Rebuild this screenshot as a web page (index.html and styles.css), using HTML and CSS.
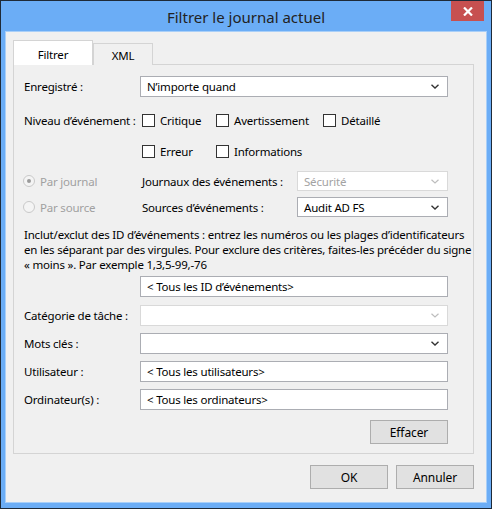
FILE: index.html
```html
<!DOCTYPE html>
<html lang="fr">
<head>
<meta charset="utf-8">
<title>Filtrer le journal actuel</title>
<link rel="stylesheet" href="styles.css">
</head>
<body>
<div class="window">
  <div class="titlebar">
    <span class="title">Filtrer le journal actuel</span>
    <div class="close" aria-label="Fermer">
      <svg width="10" height="9" viewBox="0 0 10 9"><path d="M1 0.5 L9 8.5 M9 0.5 L1 8.5" stroke="#fff" stroke-width="2.2" fill="none"/></svg>
    </div>
  </div>
  <div class="client">
    <div class="tabs">
      <div class="tab active">Filtrer</div>
      <div class="tab">XML</div>
    </div>
    <div class="panel">
      <div class="row row-first">
        <span class="lbl">Enregistré :</span>
        <div class="select"><span>N’importe quand</span><svg class="chev" width="8" height="5" viewBox="0 0 8 5"><path d="M0.5 0.8 L4 4 L7.5 0.8" stroke="#333" stroke-width="1.4" fill="none"/></svg></div>
      </div>
      <div class="row row-chk1">
        <span class="lbl">Niveau d’événement :</span>
        <div class="checks">
          <label class="chk w1"><span class="box"></span>Critique</label>
          <label class="chk w2"><span class="box"></span>Avertissement</label>
          <label class="chk"><span class="box"></span>Détaillé</label>
        </div>
      </div>
      <div class="row row-chk2">
        <span class="lbl"></span>
        <div class="checks">
          <label class="chk w1"><span class="box"></span>Erreur</label>
          <label class="chk w2"><span class="box"></span>Informations</label>
        </div>
      </div>
      <div class="row row-radio1">
        <label class="radio disabled"><span class="circle checked"></span>Par journal</label>
        <div class="sub">
          <span class="sublbl">Journaux des événements :</span>
          <div class="select small disabled"><span>Sécurité</span><svg class="chev" width="8" height="5" viewBox="0 0 8 5"><path d="M0.5 0.8 L4 4 L7.5 0.8" stroke="#bdbdbd" stroke-width="1.2" fill="none"/></svg></div>
        </div>
      </div>
      <div class="row row-radio2">
        <label class="radio disabled"><span class="circle"></span>Par source</label>
        <div class="sub">
          <span class="sublbl">Sources d’événements :</span>
          <div class="select small"><span>Audit AD FS</span><svg class="chev" width="8" height="5" viewBox="0 0 8 5"><path d="M0.5 0.8 L4 4 L7.5 0.8" stroke="#333" stroke-width="1.4" fill="none"/></svg></div>
        </div>
      </div>
      <p class="help">Inclut/exclut des ID d’événements : entrez les numéros ou les plages d’identificateurs<br>en les séparant par des virgules. Pour exclure des critères, faites-les précéder du signe<br>« moins ». Par exemple 1,3,5-99,-76</p>
      <div class="row row-id">
        <span class="lbl"></span>
        <div class="input">&lt; Tous les ID d’événements&gt;</div>
      </div>
      <div class="row row-field row-cat">
        <span class="lbl">Catégorie de tâche :</span>
        <div class="select disabled"><span></span><svg class="chev" width="8" height="5" viewBox="0 0 8 5"><path d="M0.5 0.8 L4 4 L7.5 0.8" stroke="#bdbdbd" stroke-width="1.2" fill="none"/></svg></div>
      </div>
      <div class="row row-field">
        <span class="lbl">Mots clés :</span>
        <div class="select"><span></span><svg class="chev" width="8" height="5" viewBox="0 0 8 5"><path d="M0.5 0.8 L4 4 L7.5 0.8" stroke="#333" stroke-width="1.4" fill="none"/></svg></div>
      </div>
      <div class="row row-field">
        <span class="lbl">Utilisateur :</span>
        <div class="input">&lt; Tous les utilisateurs&gt;</div>
      </div>
      <div class="row row-field">
        <span class="lbl">Ordinateur(s) :</span>
        <div class="input">&lt; Tous les ordinateurs&gt;</div>
      </div>
      <div class="clear-row">
        <button class="btn">Effacer</button>
      </div>
    </div>
    <div class="actions">
      <button class="btn">OK</button>
      <button class="btn">Annuler</button>
    </div>
  </div>
</div>
</body>
</html>
```

FILE: styles.css
```css
* { box-sizing: border-box; }
html, body { margin: 0; padding: 0; background: #6badf6; }
body {
  font-family: "Segoe UI", "Noto Sans", sans-serif;
  font-size: 11.5px;
  letter-spacing: -0.2px;
  color: #000;
}
.window {
  width: 492px;
  height: 509px;
  border: 1px solid #1e2a38;
  background: #6badf6;
  padding: 0 4px 5px 4px;
  position: relative;
  display: flex;
  flex-direction: column;
}
.titlebar {
  height: 30px;
  display: flex;
  align-items: center;
  justify-content: center;
}
.title {
  font-size: 15px;
  letter-spacing: 0;
  color: #222;
  padding-top: 1px;
}
.close {
  position: absolute;
  top: 0;
  right: 7px;
  width: 33px;
  height: 20px;
  background: #c75050;
  display: flex;
  align-items: center;
  justify-content: center;
}
.client {
  flex: 1;
  background: #f0f0f0;
  border: 1px solid #a9cff8;
  padding: 9px 12px 0 7px;
  display: flex;
  flex-direction: column;
}
.tabs {
  display: flex;
  align-items: flex-end;
  height: 24px;
  position: relative;
  z-index: 1;
  margin-bottom: -1px;
}
.tab {
  height: 22px;
  border: 1px solid #d4d4d4;
  border-bottom: none;
  background: #f0f0f0;
  display: flex;
  align-items: center;
  justify-content: center;
  width: 60px;
  margin-left: -1px;
  padding-top: 1px;
}
.tab.active {
  height: 25px;
  width: 80px;
  margin-left: 0;
  background: #fff;
  margin-right: 1px;
  padding-top: 3px;
}
.panel {
  height: 390px;
  border: 1px solid #d4d4d4;
  padding: 11px 25px 0 10px;
  display: flex;
  flex-direction: column;
}
.row {
  display: grid;
  grid-template-columns: 116px 308px;
  align-items: center;
}
.row-first { height: 21px; }
.row-chk1 { height: 20px; margin-top: 13px; }
.row-chk2 { height: 20px; margin-top: 11px; }
.row-radio1 { height: 20px; margin-top: 10px; }
.row-radio2 { height: 20px; margin-top: 6px; }
.row-id { height: 21px; margin-top: 4px; }
.row-field { height: 21px; margin-top: 7px; }
.row-cat { margin-top: 8px; }
.lbl { white-space: nowrap; }
.select, .input {
  height: 100%;
  background: #fff;
  border: 1px solid #abadb3;
  display: flex;
  align-items: center;
  justify-content: space-between;
  padding: 0 8px 0 6px;
  white-space: nowrap;
}
.select.disabled {
  border-color: #d9d9d9;
  color: #a3a3a3;
}
.chev { display: block; }
.checks {
  display: flex;
  align-items: center;
  padding-left: 2px;
}
.chk {
  display: flex;
  align-items: center;
  white-space: nowrap;
}
.chk.w1 { width: 74px; }
.chk.w2 { width: 107px; }
.box {
  width: 13px;
  height: 13px;
  border: 1px solid #333;
  background: #fff;
  margin-right: 5px;
  flex: none;
}
.radio {
  display: flex;
  align-items: center;
  margin-left: -1px;
  white-space: nowrap;
}
.radio.disabled { color: #a0a0a0; }
.circle {
  width: 12px;
  height: 12px;
  border: 1px solid #c9c9c9;
  border-radius: 50%;
  background: #f4f4f4;
  margin-right: 5px;
  display: flex;
  align-items: center;
  justify-content: center;
  flex: none;
}
.circle.checked::after {
  content: "";
  width: 4px;
  height: 4px;
  border-radius: 50%;
  background: #9a9a9a;
}
.sub {
  display: flex;
  align-items: center;
  height: 100%;
  padding-left: 2px;
}
.sublbl {
  width: 155px;
  white-space: nowrap;
}
.select.small { width: 151px; }
.help {
  margin: 10px 0 0 0;
  line-height: 15px;
  white-space: nowrap;
}
.clear-row {
  display: flex;
  justify-content: flex-end;
  margin-top: 10px;
}
.btn {
  font-family: inherit;
  font-size: 12px;
  letter-spacing: -0.1px;
  color: #000;
  background: #e1e1e1;
  border: 1px solid #adadad;
  width: 78px;
  height: 24px;
  padding: 0;
  margin: 0;
}
.actions {
  display: flex;
  justify-content: flex-end;
  gap: 8px;
  margin-top: 11px;
}
```
